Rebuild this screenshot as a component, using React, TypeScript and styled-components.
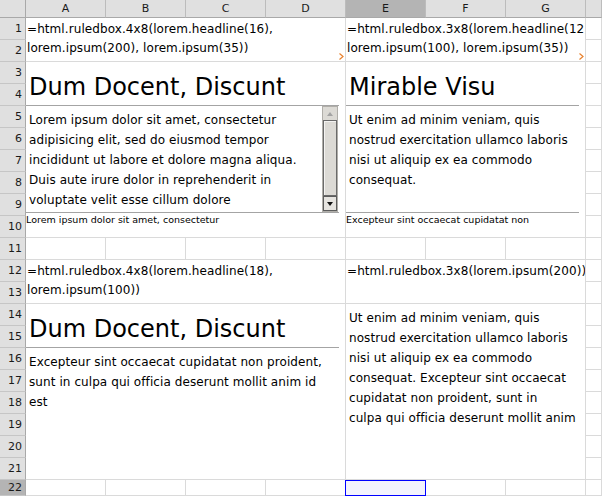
import React from "react"
import styled, { createGlobalStyle } from "styled-components"

// sheet geometry
const COLS = ["A", "B", "C", "D", "E", "F", "G", ""]
const ROW_COUNT = 22

interface Merge {
  row: number
  col: number
  rows: number
  cols: number
  content: React.ReactNode
}

// lines are broken where Calc broke them (its hinted glyph widths differ from the browser's)
const ipsum200 = [
  "Lorem ipsum dolor sit amet, consectetur",
  "adipisicing elit, sed do eiusmod tempor",
  "incididunt ut labore et dolore magna aliqua.",
  "Duis aute irure dolor in reprehenderit in",
  "voluptate velit esse cillum dolore",
]

const ipsum100 = [
  "Ut enim ad minim veniam, quis",
  "nostrud exercitation ullamco laboris",
  "nisi ut aliquip ex ea commodo",
  "consequat.",
]

const excepteur100 = [
  "Excepteur sint occaecat cupidatat non proident,",
  "sunt in culpa qui officia deserunt mollit anim id",
  "est",
]

const utEnim200 = [
  "Ut enim ad minim veniam, quis",
  "nostrud exercitation ullamco laboris",
  "nisi ut aliquip ex ea commodo",
  "consequat. Excepteur sint occaecat",
  "cupidatat non proident, sunt in",
  "culpa qui officia deserunt mollit anim",
]

const merges: Merge[] = [
  {
    row: 1, col: 1, rows: 2, cols: 4,
    content: <Formula text="=html.ruledbox.4x8(lorem.headline(16), lorem.ipsum(200), lorem.ipsum(35))" overflow />,
  },
  {
    row: 1, col: 5, rows: 2, cols: 3,
    content: <Formula text="=html.ruledbox.3x8(lorem.headline(12), lorem.ipsum(100), lorem.ipsum(35))" overflow />,
  },
  {
    row: 3, col: 1, rows: 8, cols: 4,
    content: (
      <RuledBox
        headline="Dum Docent, Discunt"
        body={ipsum200}
        foot="Lorem ipsum dolor sit amet, consectetur"
        scroll
      />
    ),
  },
  {
    row: 3, col: 5, rows: 8, cols: 3,
    content: <RuledBox headline="Mirable Visu" body={ipsum100} foot="Excepteur sint occaecat cupidatat non" />,
  },
  {
    row: 12, col: 1, rows: 2, cols: 4,
    content: <Formula text="=html.ruledbox.4x8(lorem.headline(18), lorem.ipsum(100))" />,
  },
  {
    row: 12, col: 5, rows: 2, cols: 3,
    content: <Formula text="=html.ruledbox.3x8(lorem.ipsum(200))" />,
  },
  {
    row: 14, col: 1, rows: 8, cols: 4,
    content: <RuledBox headline="Dum Docent, Discunt" body={excepteur100} />,
  },
  {
    row: 14, col: 5, rows: 8, cols: 3,
    content: <RuledBox body={utEnim200} />,
  },
]

function Formula({ text, overflow }: { text: string; overflow?: boolean }) {
  return (
    <>
      <S.FormulaText>{text}</S.FormulaText>
      {overflow && (
        <S.Marker width="5" height="7" viewBox="0 0 5 7">
          <polyline points="0.5,0.5 4,3.5 0.5,6.5" fill="none" stroke="#e8822e" strokeWidth="1.2" />
        </S.Marker>
      )}
    </>
  )
}

interface BoxProp {
  headline?: string
  body: string[]
  foot?: string
  scroll?: boolean
}

function RuledBox({ headline, body, foot, scroll }: BoxProp) {
  return (
    <S.Box>
      {headline && (
        <>
          <S.Headline>{headline}</S.Headline>
          <S.Rule />
        </>
      )}
      <S.BodyRow $fixed={!!foot}>
        <S.Body>
          {body.map((line, i) => (
            <S.Line key={i}>{line}</S.Line>
          ))}
        </S.Body>
        {scroll && (
          <S.Scrollbar>
            <S.ScrollUp>
              <S.Arrow $dir="up" />
            </S.ScrollUp>
            <S.Thumb />
            <S.ScrollDown>
              <S.Arrow $dir="down" />
            </S.ScrollDown>
          </S.Scrollbar>
        )}
      </S.BodyRow>
      {foot && (
        <>
          <S.Rule />
          <S.Foot>{foot}</S.Foot>
        </>
      )}
    </S.Box>
  )
}

export default function App() {
  const covered = new Set<string>()
  merges.forEach((m) => {
    for (let r = m.row; r < m.row + m.rows; r++)
      for (let c = m.col; c < m.col + m.cols; c++) covered.add(`${r}:${c}`)
  })

  const cells: React.ReactNode[] = []
  for (let r = 1; r <= ROW_COUNT; r++) {
    cells.push(
      <S.RowHead key={`rh${r}`} $row={r} $active={r === ROW_COUNT}>
        {r}
      </S.RowHead>
    )
    for (let c = 1; c <= COLS.length; c++) {
      if (covered.has(`${r}:${c}`)) continue
      cells.push(<S.Cell key={`c${r}:${c}`} $row={r} $col={c} $rows={1} $cols={1} $selected={r === ROW_COUNT && c === 5} />)
    }
  }

  return (
    <>
      <GlobalStyle />
      <S.Sheet>
        <S.Corner />
        {COLS.map((name, i) => (
          <S.ColHead key={`ch${i}`} $col={i + 1} $active={name === "E"}>
            {name}
          </S.ColHead>
        ))}
        {cells}
        {merges.map((m) => (
          <S.Cell key={`m${m.row}:${m.col}`} $row={m.row} $col={m.col} $rows={m.rows} $cols={m.cols}>
            {m.content}
          </S.Cell>
        ))}
      </S.Sheet>
    </>
  )
}

//style

const GlobalStyle = createGlobalStyle`
  html, body {
    margin: 0;
    padding: 0;
    background: #fff;
  }
  body {
    font-family: "DejaVu Sans", Verdana, sans-serif;
    color: #000;
  }
`

const S: any = {}

S.Sheet = styled.div`
  display: grid;
  grid-template-columns: 26px repeat(7, 80px) 1fr;
  grid-template-rows: 18px repeat(21, 22px) 1fr;
  width: 602px;
  height: 496px;
  overflow: hidden;
  background: #fff;
`

S.Corner = styled.div`
  grid-row: 1;
  grid-column: 1;
  background: #e0e0e0;
  border-right: 1px solid #a9a9a9;
  border-bottom: 1px solid #a9a9a9;
`

S.ColHead = styled.div<{ $col: number; $active: boolean }>`
  grid-row: 1;
  grid-column: ${(p) => p.$col + 1};
  display: flex;
  align-items: center;
  justify-content: center;
  font-size: 11px;
  color: #1a1a1a;
  background: ${(p) => (p.$active ? "#b4b4b4" : "#e0e0e0")};
  border-right: 1px solid #bcbcbc;
  border-bottom: 1px solid #a9a9a9;
`

S.RowHead = styled.div<{ $row: number; $active: boolean }>`
  grid-row: ${(p) => p.$row + 1};
  grid-column: 1;
  display: flex;
  align-items: center;
  justify-content: flex-end;
  padding-right: 3px;
  font-size: 11px;
  color: #1a1a1a;
  background: ${(p) => (p.$active ? "#b4b4b4" : "#e0e0e0")};
  border-right: 1px solid #a9a9a9;
  border-bottom: 1px solid #c6c6c6;
`

S.Cell = styled.div<{ $row: number; $col: number; $rows: number; $cols: number; $selected?: boolean }>`
  position: relative;
  grid-row: ${(p) => `${p.$row + 1} / span ${p.$rows}`};
  grid-column: ${(p) => `${p.$col + 1} / span ${p.$cols}`};
  min-width: 0;
  overflow: ${(p) => (p.$selected ? "visible" : "hidden")};
  background: ${(p) => (p.$selected ? "#f3f3fd" : "#fff")};
  border-right: 1px solid #dadada;
  border-bottom: 1px solid #dadada;
  display: flex;
  flex-direction: column;

  ${(p) =>
    p.$selected &&
    `
    &::after {
      content: "";
      position: absolute;
      top: 0;
      bottom: -1px;
      left: -1px;
      right: -1px;
      border: 1px solid #0000ff;
    }
  `}
`

S.FormulaText = styled.div`
  padding: 2px 0 0 1px;
  font-size: 12px;
  line-height: 19px;
  letter-spacing: 0.08px;
  white-space: normal;
`

S.Marker = styled.svg`
  position: absolute;
  right: 1px;
  bottom: 1px;
`

S.Box = styled.div`
  display: flex;
  flex-direction: column;
  flex: 1;
  margin-right: 6px;
  min-height: 0;
`

S.Headline = styled.div`
  height: 43px;
  padding: 11px 0 0 3px;
  box-sizing: border-box;
  font-size: 24px;
  line-height: 28px;
  white-space: nowrap;
  overflow: hidden;
`

S.Rule = styled.div`
  height: 1px;
  background: #a4a4a4;
  flex-shrink: 0;
`

S.BodyRow = styled.div<{ $fixed: boolean }>`
  display: flex;
  ${(p) => (p.$fixed ? "height: 106px; flex-shrink: 0;" : "flex: 1;")}
  min-height: 0;
`

S.Body = styled.div`
  flex: 1;
  min-width: 0;
  padding: 4px 0 0 3px;
  font-size: 12px;
  line-height: 20px;
  letter-spacing: 0.08px;
  overflow: hidden;
`

S.Line = styled.div`
  white-space: nowrap;
`

S.Foot = styled.div`
  padding: 1px 0 0 0;
  font-size: 9.5px;
  line-height: 12px;
  white-space: nowrap;
  overflow: hidden;
`

S.Scrollbar = styled.div`
  display: flex;
  flex-direction: column;
  width: 16px;
  margin-right: 1px;
  box-sizing: border-box;
  background: #dcdad5;
  border: 1px solid #b0aea9;
`

S.ScrollUp = styled.div`
  display: flex;
  align-items: center;
  justify-content: center;
  height: 13px;
  flex-shrink: 0;
`

S.ScrollDown = styled.div`
  display: flex;
  align-items: center;
  justify-content: center;
  height: 15px;
  flex-shrink: 0;
  box-sizing: border-box;
  border: 1px solid #5c5c5c;
  background: #e6e4e0;
`

S.Thumb = styled.div`
  flex: 1;
  border: 1px solid #6a6a6a;
  background: #dcdad5;
  box-shadow: inset 1px 1px 0 #f4f3f1;
`

S.Arrow = styled.div<{ $dir: "up" | "down" }>`
  width: 0;
  height: 0;
  border-left: 3.5px solid transparent;
  border-right: 3.5px solid transparent;
  ${(p) =>
    p.$dir === "up"
      ? "border-bottom: 4px solid #a3a3a3;"
      : "border-top: 4px solid #111;"}
`
